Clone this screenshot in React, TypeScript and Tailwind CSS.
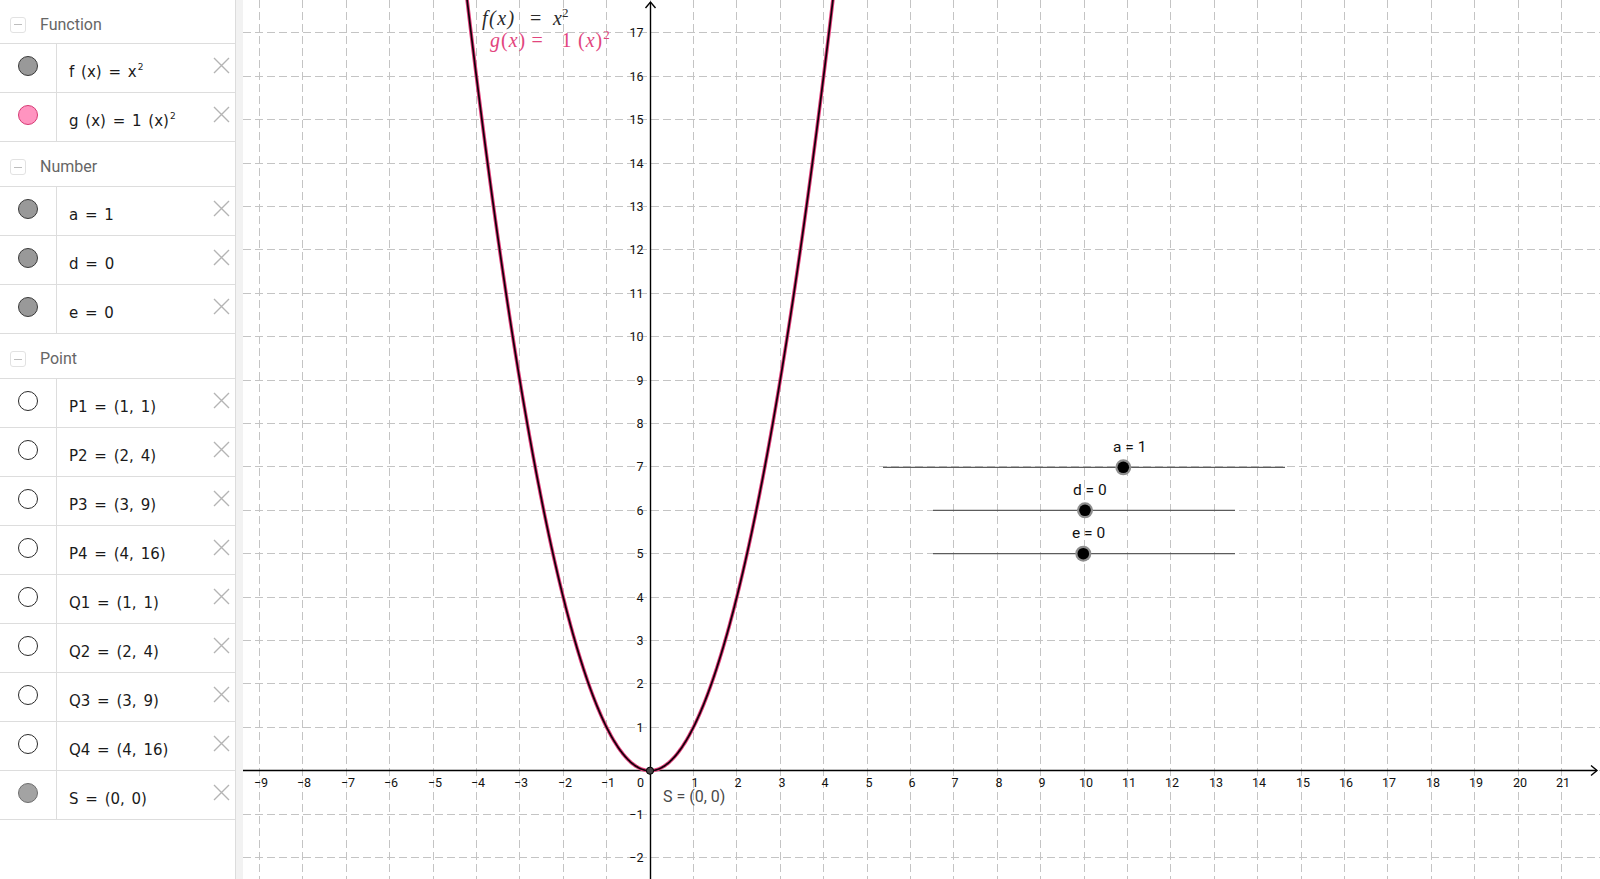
import type { ReactNode } from 'react'

type DotKind = 'gray' | 'pink' | 'hollow' | 'light'

type AlgebraItem = {
  readonly dot: DotKind
  readonly label: ReactNode
}

type AlgebraGroup = {
  readonly title: string
  readonly items: readonly AlgebraItem[]
}

const GROUPS: readonly AlgebraGroup[] = [
  {
    title: 'Function',
    items: [
      { dot: 'gray', label: <>f (x) = x<Sup>2</Sup></> },
      { dot: 'pink', label: <>g (x) = 1 (x)<Sup>2</Sup></> },
    ],
  },
  {
    title: 'Number',
    items: [
      { dot: 'gray', label: 'a = 1' },
      { dot: 'gray', label: 'd = 0' },
      { dot: 'gray', label: 'e = 0' },
    ],
  },
  {
    title: 'Point',
    items: [
      { dot: 'hollow', label: 'P1 = (1, 1)' },
      { dot: 'hollow', label: 'P2 = (2, 4)' },
      { dot: 'hollow', label: 'P3 = (3, 9)' },
      { dot: 'hollow', label: 'P4 = (4, 16)' },
      { dot: 'hollow', label: 'Q1 = (1, 1)' },
      { dot: 'hollow', label: 'Q2 = (2, 4)' },
      { dot: 'hollow', label: 'Q3 = (3, 9)' },
      { dot: 'hollow', label: 'Q4 = (4, 16)' },
      { dot: 'light', label: 'S = (0, 0)' },
    ],
  },
]

// graphics view geometry (svg coords, view starts at page x = 243)
const VIEW_W = 1357
const VIEW_H = 879
const UNIT = 43.4
const OX = 407
const OY = 770.7
const MINUS = '\u2212'

function gx(k: number): number {
  return Math.floor(OX + k * UNIT) + 0.5
}

function gy(k: number): number {
  return Math.floor(OY - k * UNIT) + 0.5
}

function range(from: number, to: number): number[] {
  const out: number[] = []
  for (let i = from; i <= to; i++) out.push(i)
  return out
}

function parabolaPath(): string {
  const parts: string[] = []
  for (let t = -4.3; t <= 4.3001; t += 0.02) {
    const x = OX + t * UNIT
    const y = OY - t * t * UNIT
    parts.push(`${parts.length === 0 ? 'M' : 'L'}${x.toFixed(2)} ${y.toFixed(2)}`)
  }
  return parts.join(' ')
}

export default function App() {
  return (
    <div className="flex h-[879px] w-[1600px] overflow-hidden bg-white">
      <aside className="flex w-[236px] shrink-0 flex-col border-r border-[#dcdcdc] bg-white">
        {GROUPS.map((group, index) => (
          <section key={group.title}>
            <GroupHeader title={group.title} first={index === 0} />
            {group.items.map((item, i) => (
              <ItemRow item={item} key={i} />
            ))}
          </section>
        ))}
      </aside>
      <div className="w-[7px] shrink-0 bg-[#f2f2f2]" />
      <div className="min-w-0 flex-1">
        <GraphicsView />
      </div>
    </div>
  )
}

function Sup(props: { readonly children: ReactNode }) {
  return <sup className="-top-[7px] ml-px text-[9px]">{props.children}</sup>
}

function GroupHeader(props: { readonly title: string; readonly first: boolean }) {
  return (
    <div
      className={`flex items-center gap-[14px] border-b border-[#dddddd] pt-[6px] pl-[10px] ${
        props.first ? 'h-[44px]' : 'h-[45px]'
      }`}
    >
      <span className="flex h-[16px] w-[16px] items-center justify-center rounded-[3px] border border-[#e2e2e2]">
        <span className="h-px w-[8px] bg-[#bdbdbd]" />
      </span>
      <span className="font-['Roboto',sans-serif] text-[16px] text-[#666666]">{props.title}</span>
    </div>
  )
}

function ItemRow(props: { readonly item: AlgebraItem }) {
  return (
    <div className="flex h-[49px] border-b border-[#dddddd]">
      <div className="flex w-[57px] shrink-0 justify-center border-r border-[#dddddd] pt-[12px] pr-px">
        <Dot kind={props.item.dot} />
      </div>
      <div className="flex-1 pt-[18px] pl-[12px] font-['DejaVu_Sans',sans-serif] text-[15px] leading-[20px] text-[#1a1a1a] [word-spacing:2px]">
        {props.item.label}
      </div>
      <div className="pt-[13px] pr-[5px]">
        <svg width="17" height="17" viewBox="0 0 17 17">
          <path d="M1 1 L16 16 M16 1 L1 16" stroke="#b4b4b4" strokeWidth="1.4" fill="none" />
        </svg>
      </div>
    </div>
  )
}

function Dot(props: { readonly kind: DotKind }) {
  switch (props.kind) {
    case 'gray':
      return <span className="block h-[20px] w-[20px] rounded-full border-[1.5px] border-[#3a3a3a] bg-[#999999]" />
    case 'pink':
      return <span className="block h-[20px] w-[20px] rounded-full border-[1.5px] border-[#d63a74] bg-[#ff94c0]" />
    case 'hollow':
      return <span className="block h-[20px] w-[20px] rounded-full border border-[#2a2a2a] bg-white" />
    case 'light':
      return <span className="block h-[20px] w-[20px] rounded-full border border-[#6e6e6e] bg-[#a3a3a3]" />
  }
}

function GraphicsView() {
  const xs = range(-9, 21)
  const ys = range(-2, 17)
  const axisY = gy(0)
  const axisX = gx(0)
  const curve = parabolaPath()

  return (
    <svg
      width={VIEW_W}
      height={VIEW_H}
      viewBox={`0 0 ${VIEW_W} ${VIEW_H}`}
      className="block"
      fontFamily="Roboto, 'Liberation Sans', sans-serif"
    >
      {/* grid */}
      <g stroke="#c4c4c4" strokeWidth="1" strokeDasharray="8 4" fill="none">
        {xs.map((k) => (
          <line key={`vx${k}`} x1={gx(k)} y1={0} x2={gx(k)} y2={VIEW_H} />
        ))}
        {ys.map((k) => (
          <line key={`hy${k}`} x1={0} y1={gy(k)} x2={VIEW_W} y2={gy(k)} />
        ))}
      </g>

      {/* axes */}
      <g stroke="#000" strokeWidth="1.4" fill="none">
        <line x1={0} y1={axisY} x2={VIEW_W - 3} y2={axisY} />
        <path d={`M${VIEW_W - 9} ${axisY - 5} L${VIEW_W - 3} ${axisY} L${VIEW_W - 9} ${axisY + 5}`} />
        <line x1={axisX} y1={VIEW_H} x2={axisX} y2={2} />
        <path d={`M${axisX - 5} 8 L${axisX} 2 L${axisX + 5} 8`} />
      </g>

      {/* axis labels */}
      <g fontSize="12.5" fill="#111">
        {xs
          .filter((k) => k !== 0)
          .map((k) => (
            <text key={`lx${k}`} x={gx(k) + 1.5} y={axisY + 16} textAnchor="middle">
              {k < 0 ? `${MINUS}${-k}` : k}
            </text>
          ))}
        <text x={axisX - 10} y={axisY + 16} textAnchor="middle">
          0
        </text>
        {ys
          .filter((k) => k !== 0)
          .map((k) => (
            <text key={`ly${k}`} x={axisX - 7} y={gy(k) + 4.5} textAnchor="end">
              {k < 0 ? `${MINUS}${-k}` : k}
            </text>
          ))}
      </g>

      {/* g(x) under f(x) */}
      <path d={curve} stroke="#e43f7c" strokeWidth="3.6" fill="none" />
      <path d={curve} stroke="#12000a" strokeWidth="1.7" fill="none" />

      {/* point S */}
      <circle cx={OX} cy={OY} r="3.6" fill="#444" stroke="#000" strokeWidth="1" />
      <text x={420} y={802} fontSize="16" fill="#4a4a4a">
        S = (0, 0)
      </text>

      {/* function labels */}
      <g fontFamily="'Liberation Serif', serif" fontSize="20">
        <text y={25} fill="#2b2b2b">
          <tspan x={239} fontStyle="italic" letterSpacing="1.5">f(x)</tspan>
          <tspan x={287}>=</tspan>
          <tspan x={310} fontStyle="italic">x</tspan>
          <tspan dy="-8" fontSize="13">2</tspan>
        </text>
        <text y={47} fill="#e2457e">
          <tspan x={247} letterSpacing="1">
            <tspan fontStyle="italic">g</tspan>(<tspan fontStyle="italic">x</tspan>)
          </tspan>
          <tspan x={288.5}>=</tspan>
          <tspan x={318.5}>1</tspan>
          <tspan x={335} letterSpacing="1">
            (<tspan fontStyle="italic">x</tspan>)
          </tspan>
          <tspan dy="-8" fontSize="13">2</tspan>
        </text>
      </g>

      {/* sliders */}
      <Slider label="a = 1" labelX={870} labelY={452} y={467.3} x1={640} x2={1042} knob={880.3} />
      <Slider label="d = 0" labelX={830} labelY={494.5} y={510.3} x1={690} x2={992} knob={842} />
      <Slider label="e = 0" labelX={829} labelY={537.5} y={553.7} x1={690} x2={992} knob={840.3} />
    </svg>
  )
}

function Slider(props: {
  readonly label: string
  readonly labelX: number
  readonly labelY: number
  readonly y: number
  readonly x1: number
  readonly x2: number
  readonly knob: number
}) {
  return (
    <g>
      <line x1={props.x1} y1={props.y} x2={props.x2} y2={props.y} stroke="#5c5c5c" strokeWidth="1.2" />
      <circle cx={props.knob} cy={props.y} r="8" fill="#8e8e8e" />
      <circle cx={props.knob} cy={props.y} r="5.8" fill="#000" />
      <text x={props.labelX} y={props.labelY} fontSize="15.5" fill="#111">
        {props.label}
      </text>
    </g>
  )
}
